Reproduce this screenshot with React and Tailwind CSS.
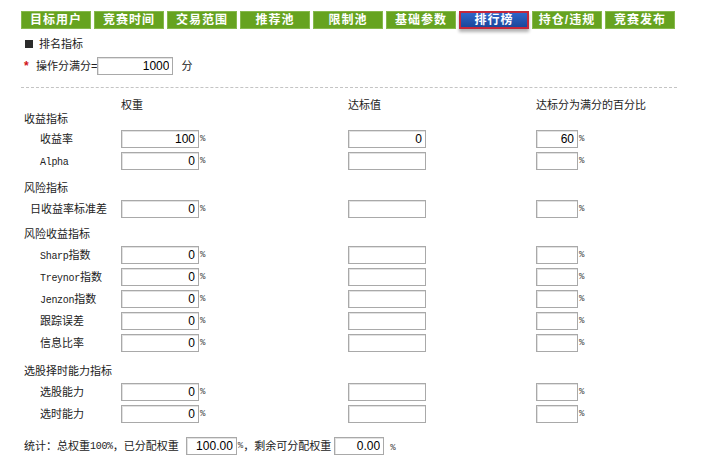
import React from "react";

const tabs = ["目标用户", "竞赛时间", "交易范围", "推荐池", "限制池", "基础参数", "排行榜", "持仓/违规", "竞赛发布"];

const FONT = { fontFamily: '"Liberation Sans", "Noto Sans CJK SC", sans-serif' };
const MONO = { fontFamily: '"Liberation Mono", monospace' };

function Box({ w, value }) {
    return (
        <input
            readOnly
            defaultValue={value}
            className={`${w} h-[18px] border border-[#a9a9a9] shadow-[inset_1px_1px_0_#e2e2e2] bg-white text-right pr-[3px] text-[12px] text-black outline-none`}
        />
    );
}

function Pct() {
    return <span className="text-[9px] text-[#444] ml-[1px] leading-none" style={MONO}>%</span>;
}

function Label({ text }) {
    // latin prefix uses a narrow mono face, like the original page
    const m = text.match(/^([A-Za-z]+)(.*)$/);
    if (!m) return <span>{text}</span>;
    return (
        <span>
            <span className="text-[10px] tracking-[-0.3px]" style={MONO}>{m[1]}</span>
            {m[2]}
        </span>
    );
}

function Row({ label, indent = "pl-[16px]", weight = "0", target = "", pct = "" }) {
    return (
        <div className="grid grid-cols-[97px_227px_188px_1fr] h-[22px] items-center">
            <div className={indent}><Label text={label} /></div>
            <div className="flex items-center"><Box w="w-[78px]" value={weight} /><Pct /></div>
            <div className="flex items-center"><Box w="w-[78px]" value={target} /></div>
            <div className="flex items-center"><Box w="w-[42px]" value={pct} /><Pct /></div>
        </div>
    );
}

export default function App() {
    return (
        <div className="w-[710px] h-[464px] bg-white text-[11px] text-[#222] overflow-hidden" style={FONT}>
            <div className="pl-[21px] pt-[11px]">
                <div className="flex gap-[3px]">
                    {tabs.map((t, i) =>
                        i === 6 ? (
                            <div key={t} className="w-[70px] h-[18px] flex items-center justify-center text-white font-bold text-[12px] tracking-[1px] border-2 border-[#c4273a] bg-gradient-to-b from-[#2f66c9] to-[#1b479b] shadow-[0_3px_3px_rgba(0,0,0,0.3)]">
                                {t}
                            </div>
                        ) : (
                            <div key={t} className="w-[70px] h-[18px] flex items-center justify-center text-white font-bold text-[12px] tracking-[1px] bg-[#66a320] border border-[#86b94d]">
                                {t}
                            </div>
                        )
                    )}
                </div>

                <div className="mt-[6px] h-[18px] flex items-center pl-[4px] gap-[6px]">
                    <div className="w-[8px] h-[8px] bg-[#2b2b2b]" />
                    <span>排名指标</span>
                </div>

                <div className="mt-[4px] h-[18px] flex items-center pl-[3px]">
                    <span className="text-[#d0121b] text-[12px] font-bold w-[12px]">*</span>
                    <span>操作分满分=</span>
                    <Box w="w-[76px]" value="1000" />
                    <span className="ml-[8px]">分</span>
                </div>

                <div className="mt-[12px] w-[656px] border-t border-dashed border-[#c4c4c4]" />

                <div className="pl-[3px]">
                    <div className="mt-[9px] grid grid-cols-[97px_227px_188px_1fr] h-[14px] items-center">
                        <div />
                        <div>权重</div>
                        <div>达标值</div>
                        <div>达标分为满分的百分比</div>
                    </div>

                    <div className="h-[17px] flex items-center">收益指标</div>
                    <Row label="收益率" weight="100" target="0" pct="60" />
                    <Row label="Alpha" />

                    <div className="h-[26px] pt-[6px] flex items-start leading-[20px]">风险指标</div>
                    <Row label="日收益率标准差" indent="pl-[6px]" />

                    <div className="h-[24px] pt-[4px] flex items-start leading-[20px]">风险收益指标</div>
                    <Row label="Sharp指数" />
                    <Row label="Treynor指数" />
                    <Row label="Jenzon指数" />
                    <Row label="跟踪误差" />
                    <Row label="信息比率" />

                    <div className="h-[27px] pt-[7px] flex items-start leading-[20px]">选股择时能力指标</div>
                    <Row label="选股能力" />
                    <Row label="选时能力" />

                    <div className="mt-[10px] h-[22px] flex items-center">
                        <span>统计：总权重</span>
                        <span className="text-[10px] tracking-[-0.3px]" style={MONO}>100%</span>
                        <span>，已分配权重</span>
                        <span className="ml-[7px]"><Box w="w-[51px]" value="100.00" /></span>
                        <Pct />
                        <span>，剩余可分配权重</span>
                        <span className="ml-[3px]"><Box w="w-[50px]" value="0.00" /></span>
                        <span className="ml-[5px]"><Pct /></span>
                    </div>
                </div>
            </div>
        </div>
    );
}
